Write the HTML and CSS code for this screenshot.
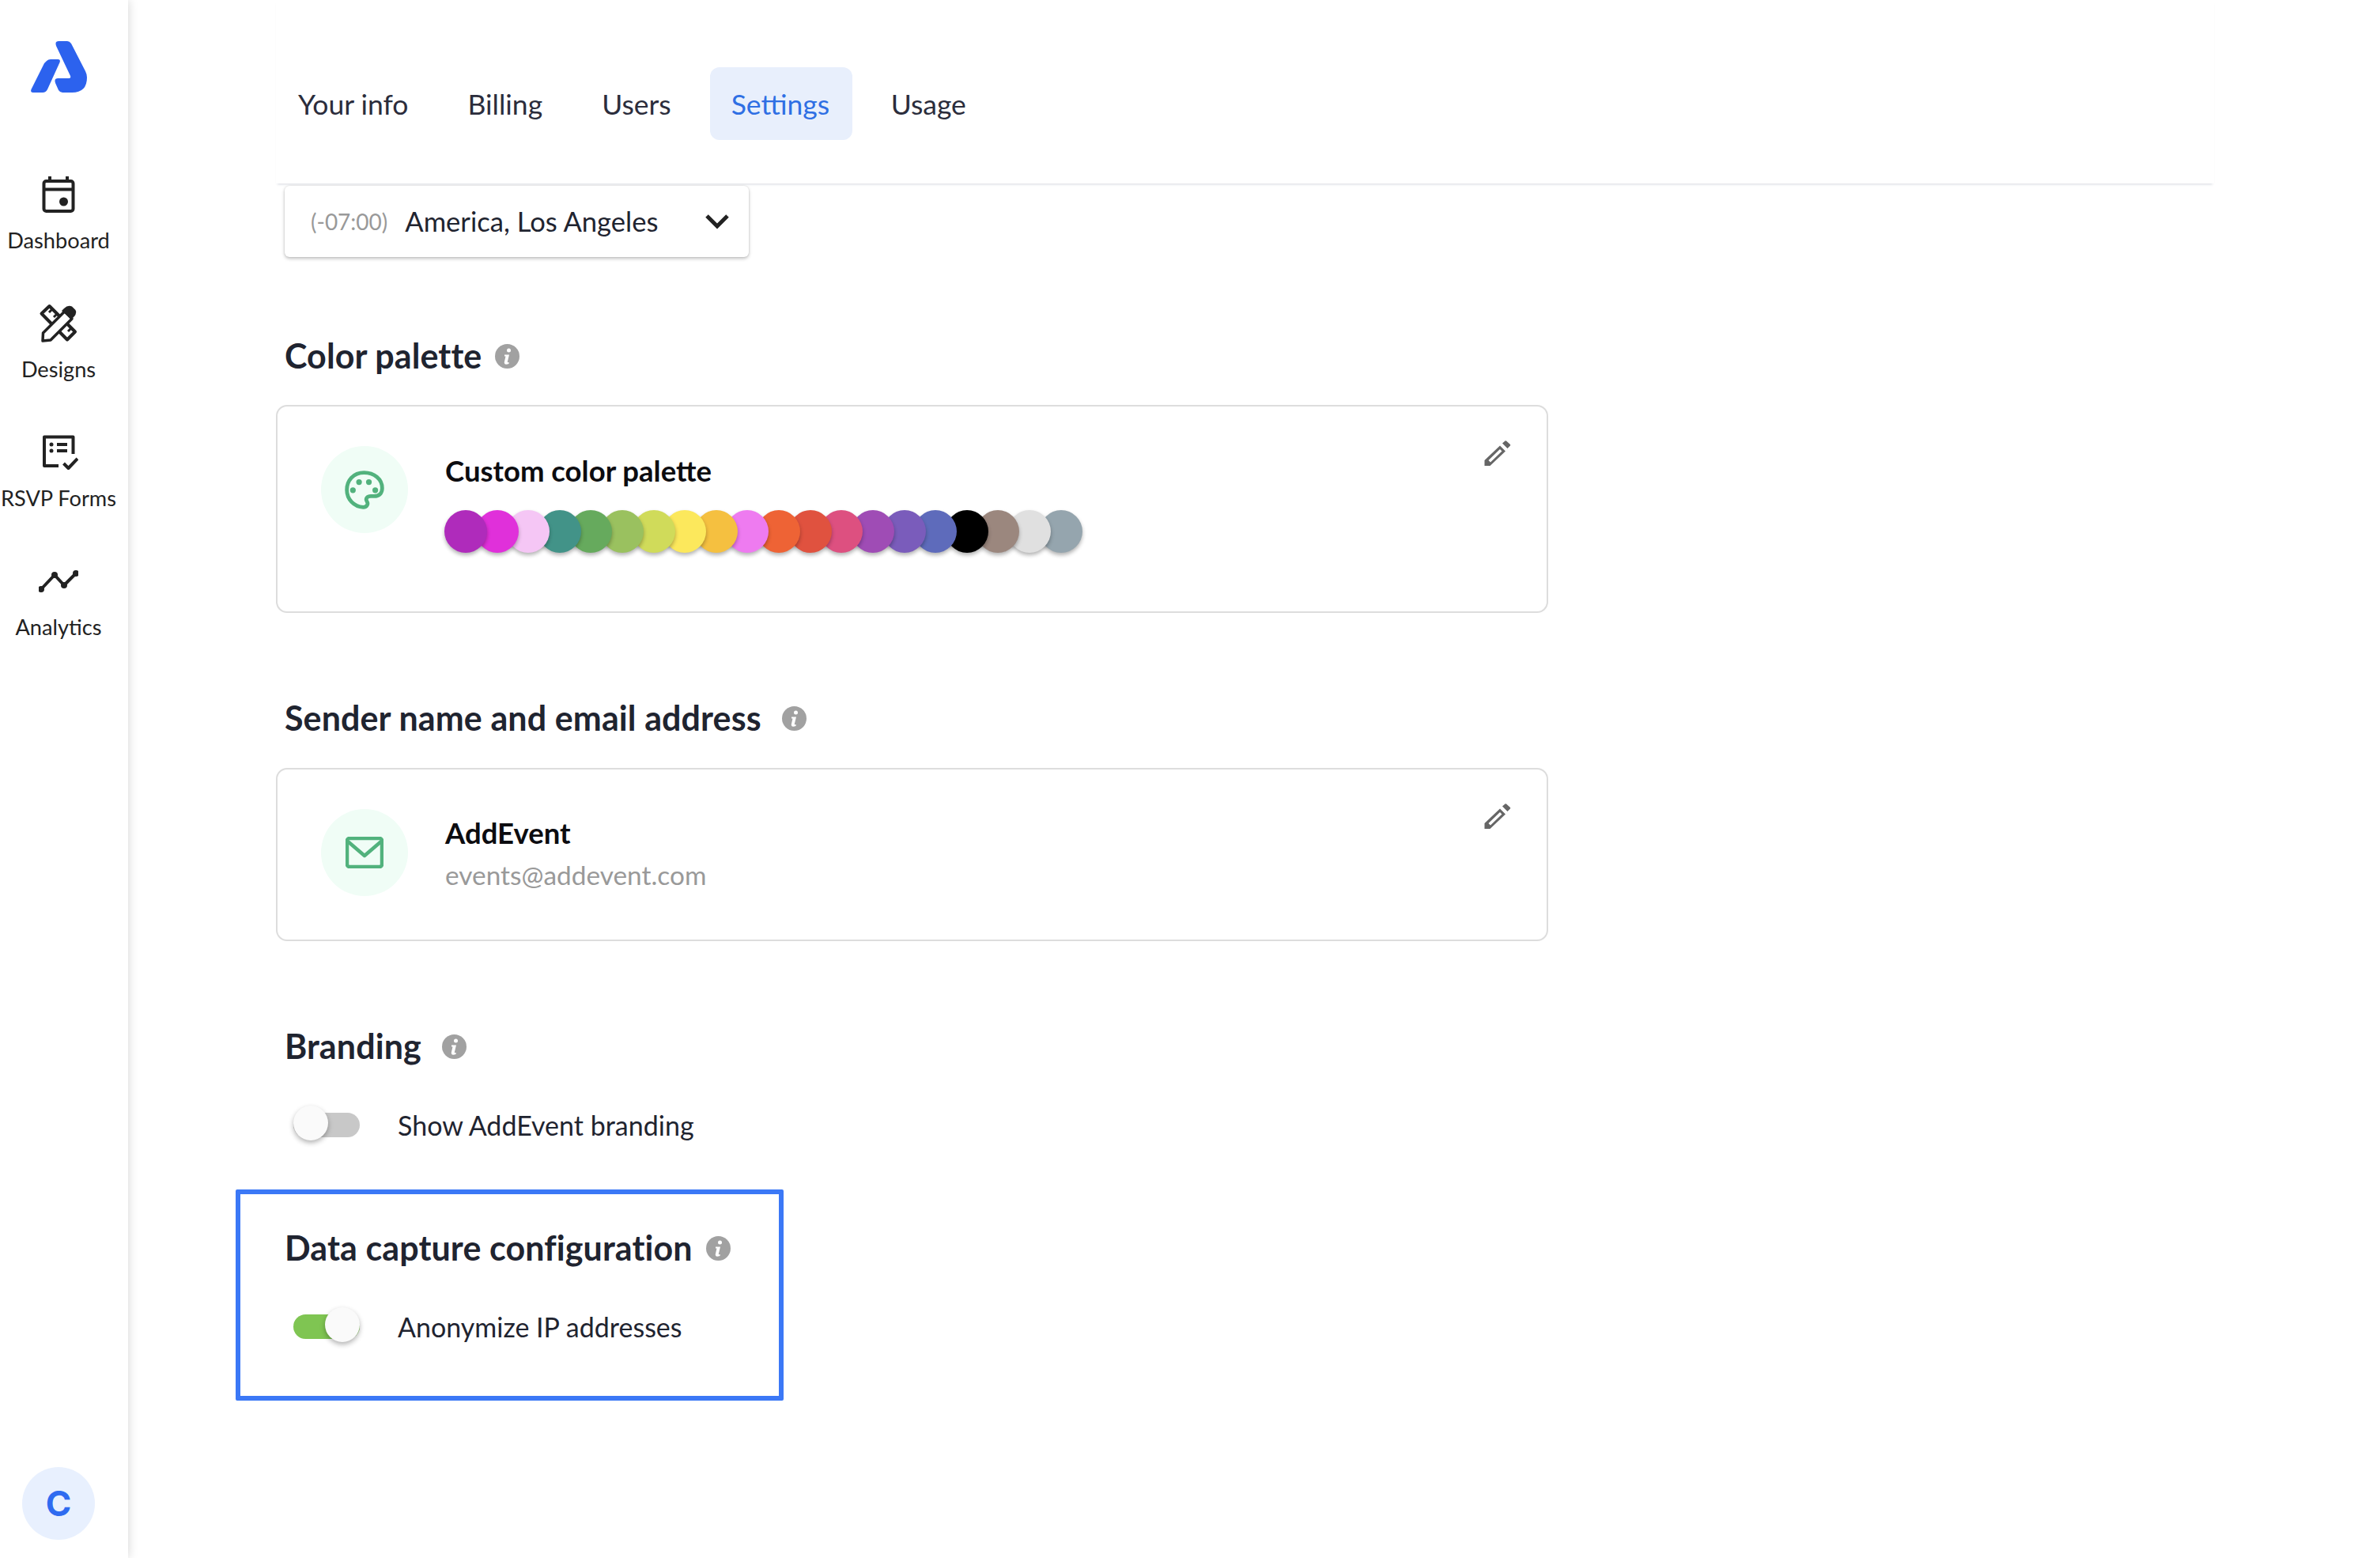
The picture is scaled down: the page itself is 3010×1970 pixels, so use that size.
FILE: index.html
```html
<!DOCTYPE html>
<html lang="en">
<head>
<meta charset="utf-8">
<title>Settings</title>
<link rel="stylesheet" href="styles.css">
</head>
<body>
<div class="app">
  <aside class="sidebar">
    <svg class="logo" width="72" height="66" viewBox="37 52 72 66"><path d="M58 77Q60 75 63 75L72 75Q76 75 74.500 79L59 113Q57 117 53 117L41 117Q37 117 38.500 113L55 80Z"/><path d="M73 52L84 52Q87 52 89 55L107 90Q109 94 109 98Q109 117 90 117L78 117Q75 117 73 114L69 105Q67 99 72 99L86 99Q89 99 88 96L70 58Q68 52 73 52Z"/></svg>
    <nav class="side-nav">
      <a class="side-item">
        <svg class="side-icon" width="50" height="50" viewBox="49 220 50 50"><rect x="55.500" y="228" width="37" height="38" rx="3"/><path d="M55 238.500H93M63 222V228M85 222V228"/><circle class="solid" cx="80.500" cy="254" r="5.500"/></svg>
        <span>Dashboard</span>
      </a>
      <a class="side-item">
        <svg class="side-icon" width="50" height="50" viewBox="49 383 50 50"><path d="M52.500 395.500L62.500 386L95 418.500L85 428.500Z"/><path class="thin" d="M66 390L62 394M72 396L68 400M84 408L80 412M90 414L86 418"/><path class="cover" d="M54.500 420L82 392.500L91 402L64 429L54 430Z"/><path class="solid" d="M81 389Q86 384 91 386.500L95 390.500Q98 394 94 399L90 403L78 392Z"/></svg>
        <span>Designs</span>
      </a>
      <a class="side-item">
        <svg class="side-icon" width="50" height="50" viewBox="49 547 50 50"><path d="M74 589H56V552.500H92.500V574"/><path d="M72 562H85M72 570H85M80.500 586L86.500 592L98 580"/><circle class="solid" cx="65" cy="562" r="2.500"/><circle class="solid" cx="65" cy="570" r="2.500"/></svg>
        <span>RSVP Forms</span>
      </a>
      <a class="side-item">
        <svg class="side-icon" width="50" height="50" viewBox="49 708 50 50"><path d="M52 743L69 725L81 738L96 723"/><circle class="solid" cx="52" cy="743" r="4"/><circle class="solid" cx="69" cy="725" r="4"/><circle class="solid" cx="81" cy="738" r="4"/><circle class="solid" cx="96" cy="723" r="4"/></svg>
        <span>Analytics</span>
      </a>
    </nav>
    <div class="avatar">C</div>
  </aside>
  <main class="main">
    <header class="tabs">
      <a class="tab">Your info</a>
      <a class="tab">Billing</a>
      <a class="tab">Users</a>
      <a class="tab tab-active">Settings</a>
      <a class="tab">Usage</a>
    </header>
    <div class="content">
      <div class="select">
        <span class="tz">(-07:00)</span>
        <span class="city">America, Los Angeles</span>
        <svg class="chevron" width="32" height="20" viewBox="0 0 32 20"><path d="M3 3L16 16L29 3"/></svg>
      </div>

      <h2 class="heading h-palette">Color palette <svg class="info" width="31" height="31" viewBox="0 0 31 31"><circle cx="15.500" cy="15.500" r="15.500"/><circle class="i" cx="17.500" cy="8" r="2.500"/><path class="i" d="M12 13.500H18L15.800 22.500Q15.600 23.800 17.800 23L17.500 25Q13 26.800 12 24.500Q11.500 23.500 12 22L13.500 15.500H12Z"/></svg></h2>
      <section class="card card-palette">
        <div class="badge">
          <svg class="badge-icon" width="50" height="49" viewBox="0 0 47 46"><path d="M23 2.500C10 2.500 2.500 12 2.500 23C2.500 34 11 43 22 43.500C27 43.500 28 39 26.500 37C24 33 27 30.500 31 30.500H35C41 30.500 44.500 27 44.500 21C44.500 10 35 2.500 23 2.500Z"/><circle class="dot" cx="17" cy="13.700" r="3.400"/><circle class="dot" cx="28.700" cy="13.700" r="3.400"/><circle class="dot" cx="9.700" cy="23.300" r="3.400"/><circle class="dot" cx="36.300" cy="23.300" r="3.400"/></svg>
        </div>
        <div class="card-body body-palette">
          <div class="card-title">Custom color palette</div>
          <div class="swatches">
            <i class="sw c1"></i><i class="sw c2"></i><i class="sw c3"></i><i class="sw c4"></i><i class="sw c5"></i><i class="sw c6"></i><i class="sw c7"></i><i class="sw c8"></i><i class="sw c9"></i><i class="sw c10"></i><i class="sw c11"></i><i class="sw c12"></i><i class="sw c13"></i><i class="sw c14"></i><i class="sw c15"></i><i class="sw c16"></i><i class="sw c17"></i><i class="sw c18"></i><i class="sw c19"></i><i class="sw c20"></i>
          </div>
        </div>
        <svg class="pencil" width="34" height="34" viewBox="0 0 34 34"><path d="M0.500 32V25L20 6.500L27 13.500L7.500 32ZM5.500 25L20 11L22.500 13.500L8 27.500Z" fill-rule="evenodd"/><path d="M23 3.500L26.500 0.500Q27.500 0 28 0.500L33 5Q33.500 6 33 6.500L29.500 10Z"/></svg>
      </section>

      <h2 class="heading h-next">Sender name and email address <svg class="info info-wide" width="31" height="31" viewBox="0 0 31 31"><circle cx="15.500" cy="15.500" r="15.500"/><circle class="i" cx="17.500" cy="8" r="2.500"/><path class="i" d="M12 13.500H18L15.800 22.500Q15.600 23.800 17.800 23L17.500 25Q13 26.800 12 24.500Q11.500 23.500 12 22L13.500 15.500H12Z"/></svg></h2>
      <section class="card card-sender">
        <div class="badge">
          <svg class="badge-icon" width="48" height="40" viewBox="0 0 48 40"><rect x="2" y="2" width="44" height="36" rx="3"/><path d="M3 6L24 24L45 6"/></svg>
        </div>
        <div class="card-body body-sender">
          <div class="card-title">AddEvent</div>
          <div class="card-sub">events@addevent.com</div>
        </div>
        <svg class="pencil" width="34" height="34" viewBox="0 0 34 34"><path d="M0.500 32V25L20 6.500L27 13.500L7.500 32ZM5.500 25L20 11L22.500 13.500L8 27.500Z" fill-rule="evenodd"/><path d="M23 3.500L26.500 0.500Q27.500 0 28 0.500L33 5Q33.500 6 33 6.500L29.500 10Z"/></svg>
      </section>

      <h2 class="heading h-next h-branding">Branding <svg class="info info-wide" width="31" height="31" viewBox="0 0 31 31"><circle cx="15.500" cy="15.500" r="15.500"/><circle class="i" cx="17.500" cy="8" r="2.500"/><path class="i" d="M12 13.500H18L15.800 22.500Q15.600 23.800 17.800 23L17.500 25Q13 26.800 12 24.500Q11.500 23.500 12 22L13.500 15.500H12Z"/></svg></h2>
      <div class="toggle-row">
        <span class="toggle"><span class="knob"></span></span>
        <span class="toggle-label">Show AddEvent branding</span>
      </div>

      <section class="highlight">
        <h2 class="heading h-data">Data capture configuration <svg class="info" width="31" height="31" viewBox="0 0 31 31"><circle cx="15.500" cy="15.500" r="15.500"/><circle class="i" cx="17.500" cy="8" r="2.500"/><path class="i" d="M12 13.500H18L15.800 22.500Q15.600 23.800 17.800 23L17.500 25Q13 26.800 12 24.500Q11.500 23.500 12 22L13.500 15.500H12Z"/></svg></h2>
        <div class="toggle-row">
          <span class="toggle toggle-on"><span class="knob"></span></span>
          <span class="toggle-label">Anonymize IP addresses</span>
        </div>
      </section>
    </div>
  </main>
</div>
</body>
</html>
```

FILE: styles.css
```css
* { box-sizing: border-box; }
html, body { margin: 0; padding: 0; background: #fff; }
body { font-family: "Lato", "Liberation Sans", sans-serif; color: #1f2430; overflow: hidden; }
.app { display: flex; width: 3010px; height: 1970px; }

/* Sidebar */
.sidebar {
  width: 162px; flex: none; height: 100%;
  display: flex; flex-direction: column; align-items: center;
  padding: 52px 14px 23px 0;
  background: #fff;
  box-shadow: 0 0 12px rgba(0,0,0,.18);
  position: relative; z-index: 2;
}
.logo { display: block; }
.logo path { fill: #2c62ee; }
.side-nav { display: flex; flex-direction: column; align-items: center; flex: 1; margin-top: 103px; gap: 65px; }
.side-item { display: flex; flex-direction: column; align-items: center; font-size: 27.200px; line-height: 30px; color: #222; white-space: nowrap; }
.side-icon { display: block; margin-bottom: 18px; flex: none; }
.side-icon rect, .side-icon path { fill: none; stroke: #222; stroke-width: 4; stroke-linejoin: round; }
.side-icon .thin { stroke-width: 3; }
.side-icon .cover { fill: #fff; stroke-width: 3.500; }
.side-icon .solid { fill: #222; stroke: none; }
.avatar {
  width: 92px; height: 92px; border-radius: 50%;
  background: #e8f0fe; color: #2f6bf0;
  display: flex; align-items: center; justify-content: center;
  font-family: "Inter", sans-serif; font-weight: 700; font-size: 44px;
}

/* Main */
.main { flex: 1; display: flex; flex-direction: column; min-width: 0; }
.tabs {
  height: 232px; flex: none; margin: 0 210px 0 187px;
  display: flex; align-items: flex-start; gap: 23px; padding: 85px 0 0 2px;
  box-shadow: 0 3px 3px -2px rgba(30,40,80,.18);
}
.tab { height: 92px; display: flex; align-items: center; padding: 0 26px; font-size: 35.500px; color: #2b2d3c; border-radius: 12px; }
.tab-active { background: #e8effc; color: #2f6fe4; padding: 0 28.500px 0 27px; }

.content { padding-left: 136px; display: flex; flex-direction: column; align-items: flex-start; }

.select {
  width: 587px; height: 90px; margin-top: 3px; margin-left: 62px;
  display: flex; align-items: center; padding: 0 24px 0 33px;
  background: #fff; border-radius: 6px;
  box-shadow: 0 2px 4px rgba(0,0,0,.25), 0 0 2px rgba(0,0,0,.12);
}
.tz { font-size: 28px; color: #999; margin-right: 22px; }
.city { font-size: 34.600px; color: #1f2430; flex: 1; position: relative; top: -1px; }
.chevron path { fill: none; stroke: #222; stroke-width: 5; }

.heading { margin: 0; height: 50px; display: flex; align-items: center; font-size: 43px; letter-spacing: .1px; line-height: 50px; font-weight: 700; color: #1f2430; white-space: nowrap; }
.h-palette { margin: 100px 0 37px 62px; }
.h-next { margin: 108px 0 38px 62px; }
.h-branding { margin-bottom: 49px; }
.h-data { margin: 0 0 49px 56px; }
.info { flex: none; margin-left: 17px; }
.info-wide { margin-left: 26px; }
.info circle { fill: #a1a1a1; }
.info .i { fill: #fff; }

/* Cards */
.card {
  width: 1609px; margin-left: 51px;
  display: flex; align-items: flex-start;
  padding: 50px 45px 0 55px;
  background: #fff; border: 2px solid #ddd; border-radius: 14px;
}
.card-palette { height: 263px; }
.card-sender { height: 219px; }
.badge { width: 110px; height: 110px; flex: none; border-radius: 50%; background: #f0fdf6; display: flex; align-items: center; justify-content: center; }
.badge-icon path, .badge-icon rect { fill: none; stroke: #52b27d; stroke-width: 4.500; stroke-linejoin: round; }
.badge-icon .dot { fill: #52b27d; }
.card-body { margin-left: 47px; flex: 1; }
.body-palette { padding-top: 9px; }
.body-sender { padding-top: 8px; }
.card-title { font-size: 36.500px; line-height: 44px; font-weight: 700; color: #0c0c10; }
.card-sub { margin-top: 9px; font-size: 33.400px; line-height: 44px; color: #999; }
.pencil { flex: none; margin-top: -7px; }
.pencil path { fill: #666; }

.swatches { display: flex; width: 806px; margin: 28px 0 0 -1px; }
.sw { display: block; position: relative; width: 54px; height: 54px; border-radius: 50%; margin-left: -14.400px; box-shadow: 0 3px 5px rgba(0,0,0,.3); flex: none; }
.sw.c1 { margin-left: 0; background: #af2bbb; z-index: 20; }
.c2 { background: #e030da; z-index: 19; }
.c3 { background: #f5c6f5; z-index: 18; }
.c4 { background: #429388; z-index: 17; }
.c5 { background: #66aa5d; z-index: 16; }
.c6 { background: #9ac15f; z-index: 15; }
.c7 { background: #d0db5a; z-index: 14; }
.c8 { background: #fce85c; z-index: 13; }
.c9 { background: #f5c040; z-index: 12; }
.c10 { background: #ee7bf0; z-index: 11; }
.c11 { background: #ee6335; z-index: 10; }
.c12 { background: #e0523f; z-index: 9; }
.c13 { background: #dd5080; z-index: 8; }
.c14 { background: #9f4cb5; z-index: 7; }
.c15 { background: #7a5cbb; z-index: 6; }
.c16 { background: #5e6bbb; z-index: 5; }
.c17 { background: #000; z-index: 4; }
.c18 { background: #9b877e; z-index: 3; }
.c19 { background: #e0e0e0; z-index: 2; }
.c20 { background: #95a5ae; z-index: 1; }

/* Toggles */
.toggle-row { display: flex; align-items: flex-start; height: 46px; margin-left: 73px; }
.toggle { width: 84px; height: 31px; margin-top: 10px; border-radius: 16px; background: #c8c8c8; flex: none; display: flex; align-items: center; justify-content: flex-start; }
.toggle-on { background: #7fc552; justify-content: flex-end; }
.knob { width: 44px; height: 44px; margin-top: -6px; border-radius: 50%; background: #fafafa; box-shadow: 0 3px 6px rgba(0,0,0,.3); flex: none; }
.toggle-label { margin-left: 48px; font-size: 34px; line-height: 52px; color: #1f2430; white-space: nowrap; }

/* Annotation box */
.highlight {
  width: 693px; height: 267px; margin-top: 61px;
  padding-top: 43px;
  border: 6px solid #3b78f6; border-radius: 2px;
}
.highlight .toggle-row { margin-left: 67px; }
```
